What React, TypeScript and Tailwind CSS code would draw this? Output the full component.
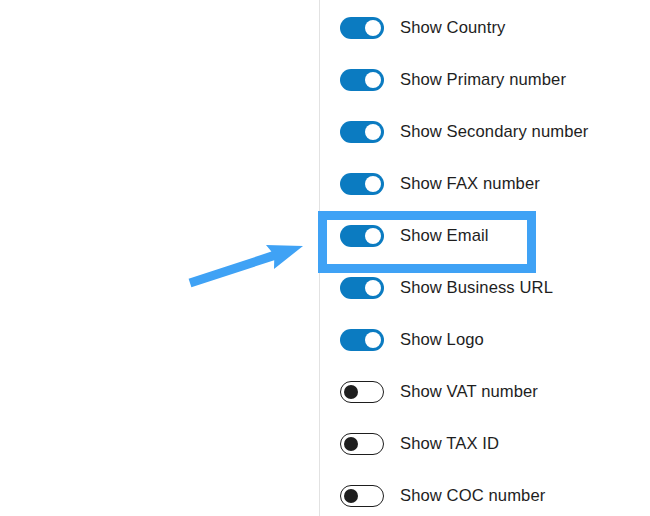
import React from 'react';

type Item = { label: string; on: boolean };

const items: Item[] = [
  { label: 'Show Country', on: true },
  { label: 'Show Primary number', on: true },
  { label: 'Show Secondary number', on: true },
  { label: 'Show FAX number', on: true },
  { label: 'Show Email', on: true },
  { label: 'Show Business URL', on: true },
  { label: 'Show Logo', on: true },
  { label: 'Show VAT number', on: false },
  { label: 'Show TAX ID', on: false },
  { label: 'Show COC number', on: false },
];

function Toggle({ on }: { on: boolean }) {
  if (on) {
    return (
      <div className="flex h-[22px] w-[44px] shrink-0 items-center justify-end rounded-full bg-[#0b7bc1] pr-[3px]">
        <div className="h-[16px] w-[16px] rounded-full bg-white" />
      </div>
    );
  }
  return (
    <div className="flex h-[22px] w-[44px] shrink-0 items-center rounded-full border-[1.5px] border-[#1e1e1e] bg-white pl-[3px]">
      <div className="h-[14px] w-[14px] rounded-full bg-[#1e1e1e]" />
    </div>
  );
}

export default function App() {
  return (
    <div className="relative h-[516px] w-[650px] overflow-hidden bg-white" style={{ fontFamily: '"Liberation Sans", Arial, sans-serif' }}>
      <div className="flex h-full">
        <div className="w-[319px] shrink-0" />
        <div className="h-full border-l border-[#e2e2e2] pl-[20px] pt-[2px]">
          {items.map((item) => (
            <div key={item.label} className="flex h-[52px] items-center gap-[16px]">
              <Toggle on={item.on} />
              <span className="pt-[1px] text-[16.6px] tracking-[0.1px] text-[#1e1e1e]">{item.label}</span>
            </div>
          ))}
        </div>
      </div>

      {/* highlight box */}
      <div className="absolute left-[318px] top-[211px] h-[62px] w-[218px] border-[9px] border-[#3fa2f5]" />

      {/* arrow */}
      <svg className="absolute left-0 top-0" width="650" height="516" viewBox="0 0 650 516">
        <polygon
          fill="#3fa2f5"
          points="188.6,278.7 271.4,251.6 266,245 303,246 274,269 274.2,260.2 191.4,287.3"
        />
      </svg>
    </div>
  );
}
